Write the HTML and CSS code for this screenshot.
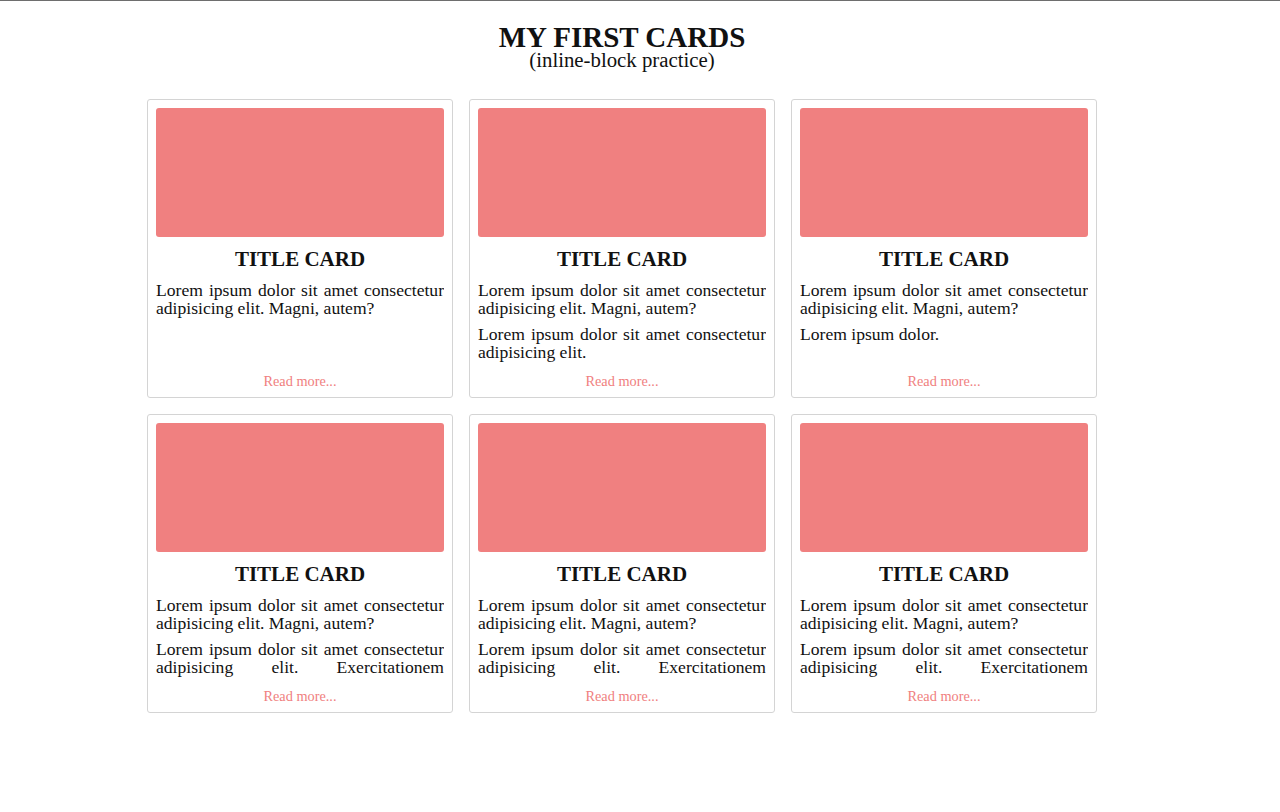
FILE: index.html
```html
<!DOCTYPE html>
<html lang="en">
<head>
<meta charset="utf-8">
<title>My First Cards</title>
<link rel="stylesheet" href="styles.css">
</head>
<body>
<div class="page">
  <header class="header">
    <h1 class="title">MY FIRST CARDS</h1>
    <p class="subtitle">(inline-block practice)</p>
  </header>
  <main class="cards">
    <article class="card">
      <div class="card-img"></div>
      <h2 class="card-title">TITLE CARD</h2>
      <div class="card-text">
        <p>Lorem ipsum dolor sit amet consectetur adipisicing elit. Magni, autem?</p>
      </div>
      <a class="card-link" href="#">Read more...</a>
    </article>
    <article class="card">
      <div class="card-img"></div>
      <h2 class="card-title">TITLE CARD</h2>
      <div class="card-text">
        <p>Lorem ipsum dolor sit amet consectetur adipisicing elit. Magni, autem?</p>
        <p>Lorem ipsum dolor sit amet consectetur adipisicing elit.</p>
      </div>
      <a class="card-link" href="#">Read more...</a>
    </article>
    <article class="card">
      <div class="card-img"></div>
      <h2 class="card-title">TITLE CARD</h2>
      <div class="card-text">
        <p>Lorem ipsum dolor sit amet consectetur adipisicing elit. Magni, autem?</p>
        <p>Lorem ipsum dolor.</p>
      </div>
      <a class="card-link" href="#">Read more...</a>
    </article>
    <article class="card">
      <div class="card-img"></div>
      <h2 class="card-title">TITLE CARD</h2>
      <div class="card-text">
        <p>Lorem ipsum dolor sit amet consectetur adipisicing elit. Magni, autem?</p>
        <p>Lorem ipsum dolor sit amet consectetur adipisicing elit. Exercitationem voluptatum quibusdam, nemo dolorum aut velit.</p>
      </div>
      <a class="card-link" href="#">Read more...</a>
    </article>
    <article class="card">
      <div class="card-img"></div>
      <h2 class="card-title">TITLE CARD</h2>
      <div class="card-text">
        <p>Lorem ipsum dolor sit amet consectetur adipisicing elit. Magni, autem?</p>
        <p>Lorem ipsum dolor sit amet consectetur adipisicing elit. Exercitationem voluptatum quibusdam, nemo dolorum aut velit.</p>
      </div>
      <a class="card-link" href="#">Read more...</a>
    </article>
    <article class="card">
      <div class="card-img"></div>
      <h2 class="card-title">TITLE CARD</h2>
      <div class="card-text">
        <p>Lorem ipsum dolor sit amet consectetur adipisicing elit. Magni, autem?</p>
        <p>Lorem ipsum dolor sit amet consectetur adipisicing elit. Exercitationem voluptatum quibusdam, nemo dolorum aut velit.</p>
      </div>
      <a class="card-link" href="#">Read more...</a>
    </article>
  </main>
</div>
</body>
</html>
```

FILE: styles.css
```css
html, body {
  margin: 0;
  padding: 0;
  background: #ffffff;
}

body {
  font-family: "Liberation Serif", "Times New Roman", serif;
  color: #111111;
}

.page {
  border-top: 1px solid #6e6e6e;
  padding-top: 23px;
  min-height: 790px;
}

.header {
  width: 950px;
  margin-left: 147px;
  text-align: center;
}

.title {
  margin: 0;
  font-size: 29px;
  line-height: 26px;
  font-weight: bold;
}

.subtitle {
  margin: 0;
  font-size: 20.8px;
  line-height: 20px;
}

.cards {
  width: 950px;
  margin: 29px 0 0 147px;
  display: grid;
  grid-template-columns: repeat(3, 306px);
  column-gap: 16px;
  row-gap: 16px;
}

.card {
  box-sizing: border-box;
  height: 299px;
  border: 1px solid #d4d4d4;
  border-radius: 3px;
  padding: 8px;
  display: flex;
  flex-direction: column;
}

.card-img {
  height: 129px;
  background: #f08080;
  border-radius: 3px;
  flex: none;
}

.card-title {
  margin: 10px 0 10px;
  font-size: 21px;
  line-height: 24px;
  font-weight: bold;
  text-align: center;
}

.card-text {
  height: 83px;
  overflow: hidden;
  font-size: 17.6px;
  line-height: 18px;
  text-align: justify;
  flex: none;
}

.card-text p {
  margin: 0 0 8px;
}

.card-link {
  margin-top: 9px;
  display: block;
  text-align: center;
  font-size: 14.3px;
  line-height: 16px;
  color: #f08080;
  text-decoration: none;
}
```
